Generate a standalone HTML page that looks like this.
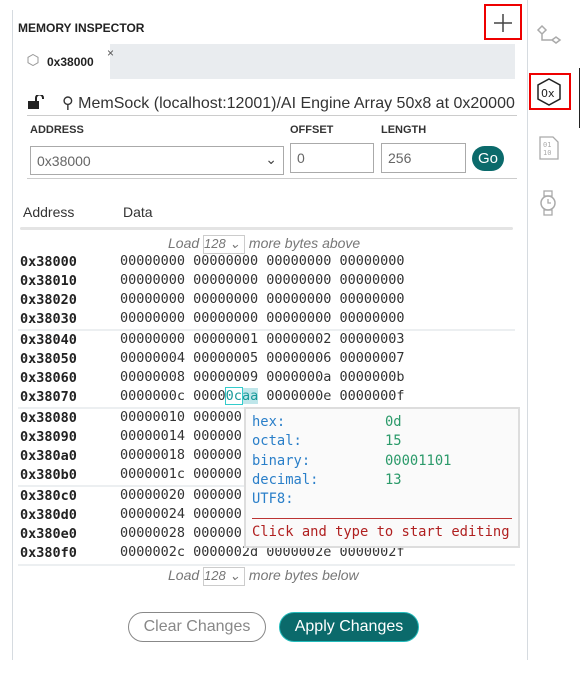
<!DOCTYPE html>
<html><head><meta charset="utf-8"><style>
body{margin:0;width:581px;height:675px;background:#fff;position:relative;overflow:hidden;font-family:"Liberation Sans",sans-serif;}
.a{position:absolute;}
.mono{font-family:"DejaVu Sans Mono",monospace;font-size:13.5px;white-space:pre;}
.addr{font-weight:bold;color:#222;left:20px;}
.dat{left:120px;color:#333;}
.sep{position:absolute;left:18px;width:497px;height:2px;background:#eceff1;}
.lbl{font-size:11px;font-weight:bold;color:#333;}
.inp{position:absolute;border:1px solid #aaa;background:#fff;font-size:14px;color:#666;box-sizing:border-box;padding:8px 6px;}
.tt{color:#2a7fc9;}
.tv{color:#2b9a6a;}
</style></head><body>
<div class="a" style="left:12px;top:10px;width:1px;height:650px;background:#d6dbe0"></div>
<div class="a" style="left:527px;top:0;width:1px;height:660px;background:#d6dbe0"></div>
<div class="a" style="left:579px;top:68px;width:1px;height:60px;background:#222"></div>
<div class="a" style="left:18px;top:21px;font-size:12px;font-weight:bold;color:#222">MEMORY INSPECTOR</div>
<div class="a" style="left:484px;top:4px;width:38px;height:36px;border:2px solid #e00;box-sizing:border-box"></div>
<svg class="a" style="left:492px;top:12px" width="22" height="22"><path d="M11 2V20M2 11H20" stroke="#444" stroke-width="1.5"/></svg>
<svg class="a" style="left:534px;top:22px" width="30" height="28"><path d="M4 8l4-4 4 4-4 4zM8 12v6h10M18 18l4-3 4 3-4 3z" fill="none" stroke="#aaa" stroke-width="1.5"/></svg>
<div class="a" style="left:529px;top:73px;width:42px;height:37px;border:2px solid #e00;box-sizing:border-box"></div>
<svg class="a" style="left:535px;top:77px" width="28" height="30"><path d="M14 2l11 6v14l-11 6-11-6V8z" fill="none" stroke="#222" stroke-width="1.5"/><text x="6" y="20" font-family="DejaVu Sans" font-size="11" fill="#222">0x</text></svg>
<svg class="a" style="left:538px;top:136px" width="22" height="24"><path d="M2 1h13l5 5v17H2z" fill="none" stroke="#aaa" stroke-width="1.3"/><text x="5" y="11" font-family="DejaVu Sans Mono" font-size="7" fill="#aaa">01</text><text x="5" y="19" font-family="DejaVu Sans Mono" font-size="7" fill="#aaa">10</text></svg>
<svg class="a" style="left:538px;top:190px" width="20" height="26"><rect x="6" y="1" width="8" height="5" fill="none" stroke="#aaa" stroke-width="1.3"/><rect x="6" y="20" width="8" height="5" fill="none" stroke="#aaa" stroke-width="1.3"/><circle cx="10" cy="13" r="7" fill="none" stroke="#aaa" stroke-width="1.5"/><path d="M10 9v4h3" stroke="#aaa" fill="none" stroke-width="1.3"/></svg>
<div class="a" style="left:110px;top:44px;width:405px;height:35px;background:#e9ecef"></div>
<svg class="a" style="left:27px;top:54px" width="12" height="12"><path d="M6 0.5l5 2.8v5.4l-5 2.8-5-2.8V3.3z" fill="none" stroke="#999"/></svg>
<div class="a" style="left:47px;top:55px;font-size:12px;font-weight:bold;color:#222">0x38000</div>
<div class="a" style="left:107px;top:46px;font-size:12px;color:#555">×</div>
<svg class="a" style="left:28px;top:95px" width="16" height="14"><rect x="0" y="6" width="11" height="8" fill="#222"/><path d="M8 6V3a3.5 3.5 0 0 1 7 0v1" fill="none" stroke="#222" stroke-width="2"/></svg>
<div class="a" style="left:62px;top:93px;font-size:16px;color:#333;white-space:nowrap;width:453px;overflow:hidden">⚲ MemSock (localhost:12001)/AI Engine Array 50x8 at 0x2000000000000</div>
<div class="a" style="left:27px;top:115px;width:490px;height:1px;background:#ccc"></div>
<div class="a lbl" style="left:30px;top:124px">ADDRESS</div>
<div class="a lbl" style="left:290px;top:124px">OFFSET</div>
<div class="a lbl" style="left:381px;top:124px">LENGTH</div>
<div class="inp" style="left:30px;top:146px;width:254px;height:29px;padding-top:6px">0x38000<span style="position:absolute;right:6px;top:4px;color:#444">⌄</span></div>
<div class="inp" style="left:290px;top:143px;width:84px;height:30px;padding-top:6px">0</div>
<div class="inp" style="left:381px;top:143px;width:85px;height:30px;padding-top:6px">256</div>
<div class="a" style="left:472px;top:146px;width:32px;height:25px;border-radius:13px;background:#0b6a6b;color:#fff;font-size:15px;text-align:center;line-height:25px">Go</div>
<div class="a" style="left:27px;top:178px;width:490px;height:1px;background:#ccc"></div>
<div class="a" style="left:23px;top:204px;font-size:14px;color:#333">Address</div>
<div class="a" style="left:123px;top:204px;font-size:14px;color:#333">Data</div>
<div class="a" style="left:20px;top:227px;width:493px;height:3px;background:#e4e4e4;border-radius:2px"></div>
<div class="a" style="left:168px;top:235px;font-size:14px;color:#777;font-style:italic;white-space:nowrap">Load <span style="display:inline-block;border:1px solid #ccc;width:40px;height:17px;font-size:13px;vertical-align:top">128 ⌄</span> more bytes above</div>
<div class="mono">
<div class="a addr" style="top:254px">0x38000</div><div class="a dat" style="top:253px">00000000 00000000 00000000 00000000</div>
<div class="a addr" style="top:273px">0x38010</div><div class="a dat" style="top:272px">00000000 00000000 00000000 00000000</div>
<div class="a addr" style="top:292px">0x38020</div><div class="a dat" style="top:291px">00000000 00000000 00000000 00000000</div>
<div class="a addr" style="top:311px">0x38030</div><div class="a dat" style="top:310px">00000000 00000000 00000000 00000000</div>
<div class="a addr" style="top:332px">0x38040</div><div class="a dat" style="top:331px">00000000 00000001 00000002 00000003</div>
<div class="a addr" style="top:351px">0x38050</div><div class="a dat" style="top:350px">00000004 00000005 00000006 00000007</div>
<div class="a addr" style="top:370px">0x38060</div><div class="a dat" style="top:369px">00000008 00000009 0000000a 0000000b</div>
<div class="a addr" style="top:389px">0x38070</div><div class="a dat" style="top:388px">0000000c 0000<span style="outline:1px solid #3cc;color:#1a9a9a">0c</span><span style="background:#bfe6ea;color:#1a9a9a">aa</span> 0000000e 0000000f</div>
<div class="a addr" style="top:410px">0x38080</div><div class="a dat" style="top:409px">00000010 000000</div>
<div class="a addr" style="top:429px">0x38090</div><div class="a dat" style="top:428px">00000014 000000</div>
<div class="a addr" style="top:448px">0x380a0</div><div class="a dat" style="top:447px">00000018 000000</div>
<div class="a addr" style="top:467px">0x380b0</div><div class="a dat" style="top:466px">0000001c 000000</div>
<div class="a addr" style="top:488px">0x380c0</div><div class="a dat" style="top:487px">00000020 000000</div>
<div class="a addr" style="top:507px">0x380d0</div><div class="a dat" style="top:506px">00000024 000000</div>
<div class="a addr" style="top:526px">0x380e0</div><div class="a dat" style="top:525px">00000028 000000</div>
<div class="a addr" style="top:545px">0x380f0</div><div class="a dat" style="top:544px">0000002c 0000002d 0000002e 0000002f</div>
</div>
<div class="sep" style="top:329px"></div>
<div class="sep" style="top:407px"></div>
<div class="sep" style="top:485px"></div>
<div class="sep" style="top:564px"></div>
<div class="a mono" style="left:244px;top:407px;width:276px;height:141px;border:2px solid #ddd;background:#fafafa;box-sizing:border-box;font-size:13.8px">
<div class="a tt" style="left:6px;top:5px">hex:</div><div class="a tv" style="left:139px;top:5px">0d</div>
<div class="a tt" style="left:6px;top:24px">octal:</div><div class="a tv" style="left:139px;top:24px">15</div>
<div class="a tt" style="left:6px;top:44px">binary:</div><div class="a tv" style="left:139px;top:44px">00001101</div>
<div class="a tt" style="left:6px;top:63px">decimal:</div><div class="a tv" style="left:139px;top:63px">13</div>
<div class="a tt" style="left:6px;top:82px">UTF8:</div>
<div class="a" style="left:6px;top:109px;width:260px;height:1px;background:#b33"></div>
<div class="a" style="left:6px;top:115px;color:#b02020">Click and type to start editing</div>
</div>
<div class="a" style="left:168px;top:567px;font-size:14px;color:#777;font-style:italic;white-space:nowrap">Load <span style="display:inline-block;border:1px solid #ccc;width:40px;height:17px;font-size:13px;vertical-align:top">128 ⌄</span> more bytes below</div>
<div class="a" style="left:128px;top:612px;width:138px;height:30px;border:1px solid #888;border-radius:16px;box-sizing:border-box;color:#888;font-size:16px;text-align:center;line-height:28px">Clear Changes</div>
<div class="a" style="left:279px;top:612px;width:140px;height:30px;background:#0b6a6b;border:1px solid #2bb;border-radius:16px;box-sizing:border-box;color:#fff;font-size:16px;text-align:center;line-height:28px">Apply Changes</div>
</body></html>
